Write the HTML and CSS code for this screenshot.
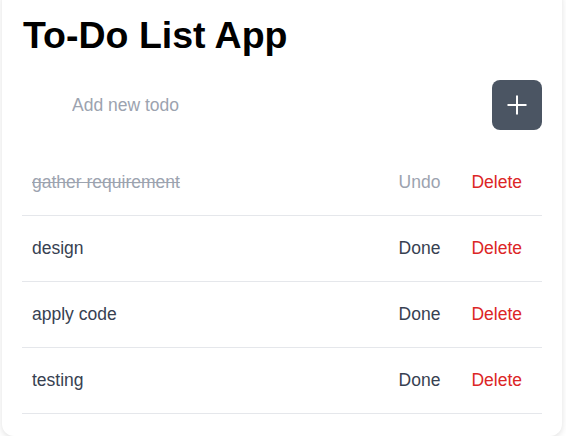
FILE: index.html
```html
<!DOCTYPE html>
<html lang="en">
<head>
<meta charset="utf-8">
<title>To-Do List App</title>
<link rel="stylesheet" href="styles.css">
</head>
<body>
<main class="card">
  <h1 class="title">To-Do List App</h1>
  <form class="add-row">
    <input class="add-input" type="text" placeholder="Add new todo">
    <button class="add-btn" type="button" aria-label="Add">
      <svg width="22" height="22" viewBox="0 0 22 22" aria-hidden="true">
        <path d="M11 1.5v19M1.5 11h19" stroke="#fff" stroke-width="2" fill="none"/>
      </svg>
    </button>
  </form>
  <ul class="list">
    <li class="item done">
      <span class="item-text">gather requirement</span>
      <span class="actions"><button class="act act-toggle">Undo</button><button class="act act-delete">Delete</button></span>
    </li>
    <li class="item">
      <span class="item-text">design</span>
      <span class="actions"><button class="act act-toggle">Done</button><button class="act act-delete">Delete</button></span>
    </li>
    <li class="item">
      <span class="item-text">apply code</span>
      <span class="actions"><button class="act act-toggle">Done</button><button class="act act-delete">Delete</button></span>
    </li>
    <li class="item">
      <span class="item-text">testing</span>
      <span class="actions"><button class="act act-toggle">Done</button><button class="act act-delete">Delete</button></span>
    </li>
  </ul>
</main>
</body>
</html>
```

FILE: styles.css
```css
* { box-sizing: border-box; }
html, body {
  margin: 0;
  padding: 0;
  background: #ffffff;
  font-family: "Liberation Sans", Arial, sans-serif;
}
.card {
  width: 560px;
  margin: -12px 0 0 2px;
  padding: 26px 20px 22px;
  background: #fff;
  border-radius: 12px;
  box-shadow: 0 2px 6px rgba(0, 0, 0, 0.12);
}
.title {
  margin: 0 0 0 1px;
  font-size: 37.5px;
  line-height: 42px;
  font-weight: 700;
  color: #000;
}
.add-row {
  display: flex;
  align-items: center;
  margin-top: 24px;
}
.add-input {
  flex: 1;
  height: 50px;
  border: none;
  outline: none;
  padding: 0 0 0 50px;
  font-family: inherit;
  font-size: 17.5px;
  color: #374151;
  background: transparent;
}
.add-input::placeholder { color: #9ca3af; }
.add-btn {
  width: 50px;
  height: 50px;
  border: none;
  border-radius: 8px;
  background: #4b5563;
  display: flex;
  align-items: center;
  justify-content: center;
  padding: 0;
}
.list {
  list-style: none;
  margin: 20px 0 0;
  padding: 0;
}
.item {
  display: flex;
  align-items: center;
  justify-content: space-between;
  padding: 19px 20px 19px 10px;
  border-bottom: 1px solid #e5e7eb;
  font-size: 17.5px;
  line-height: 27px;
  color: #374151;
}
.done .item-text {
  color: #9ca3af;
  text-decoration: line-through;
}
.actions {
  display: flex;
  gap: 31px;
}
.act {
  border: none;
  background: none;
  padding: 0;
  font-family: inherit;
  font-size: 17.5px;
  line-height: 27px;
  color: #374151;
}
.done .act-toggle { color: #9ca3af; }
.act-delete { color: #dc2626; }
```
